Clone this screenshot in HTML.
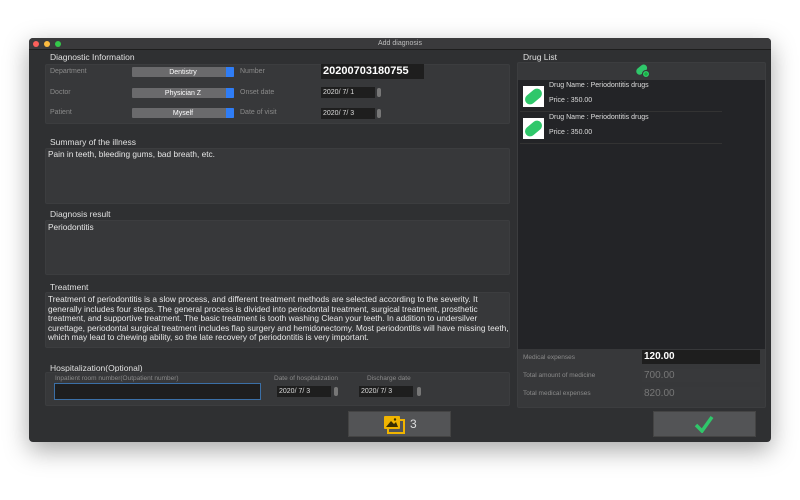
<!DOCTYPE html>
<html><head><meta charset="utf-8"><style>
*{margin:0;padding:0;box-sizing:border-box}
body{width:800px;height:500px;background:#fff;position:relative;overflow:hidden;font-family:"Liberation Sans",sans-serif;}
.a{position:absolute}
.win{left:29px;top:38px;width:742px;height:404px;background:#2f3032;box-shadow:0 8px 25px rgba(0,0,0,.35);border-radius:4px;overflow:hidden}
.tb{left:0;top:0;width:742px;height:12px;background:#3a3a3c;border-bottom:1px solid #1e1e1e;color:#bdbdbd;font-size:7px;text-align:center;line-height:12px}
.dot{width:6px;height:6px;border-radius:50%;top:3px}
.panel{background:#37383a;border:1px solid #3c3d3f;border-radius:2px}
.lt{color:#e0e0e0;font-size:8.5px}
.lg{color:#8a8a8a;font-size:7px}
.sel{background:#6a6a6c;height:10px;color:#fff;font-size:7px;text-align:center;line-height:11px;border-radius:1px}
.sel b{position:absolute;right:0;top:0;width:8px;height:10px;background:#2f7df6;border-radius:0 1px 1px 0}
.date{background:#1e1e1e;color:#ddd;font-size:7px;height:11px;line-height:11px;padding-left:2px}
.step{width:4px;height:9px;background:#777;border-radius:2px}
.txt{color:#e6e6e6;font-size:8.3px;line-height:9.6px}
</style></head><body>
<div class="a win">
<div class="a tb">Add diagnosis</div>
<div class="a dot" style="left:4px;background:#fc605b"></div>
<div class="a dot" style="left:15px;background:#fdbc40"></div>
<div class="a dot" style="left:26px;background:#34c84a"></div>

<div class="a lt" style="left:21px;top:14px">Diagnostic Information</div>
<div class="a panel" style="left:16px;top:26px;width:465px;height:60px"></div>
<div class="a lg" style="left:21px;top:30px">Department</div>
<div class="a lg" style="left:21px;top:51px">Doctor</div>
<div class="a lg" style="left:21px;top:71px">Patient</div>
<div class="a sel" style="left:103px;top:29px;width:102px">Dentistry<b></b></div>
<div class="a sel" style="left:103px;top:50px;width:102px">Physician Z<b></b></div>
<div class="a sel" style="left:103px;top:70px;width:102px">Myself<b></b></div>
<div class="a lg" style="left:211px;top:30px">Number</div>
<div class="a lg" style="left:211px;top:51px">Onset date</div>
<div class="a lg" style="left:211px;top:71px">Date of visit</div>
<div class="a" style="left:292px;top:26px;width:103px;height:15px;background:#1e1e1e;color:#fff;font-size:11px;font-weight:bold;line-height:15px;padding-left:2px">20200703180755</div>
<div class="a date" style="left:292px;top:49px;width:54px">2020/ 7/ 1</div>
<div class="a step" style="left:348px;top:50px"></div>
<div class="a date" style="left:292px;top:70px;width:54px">2020/ 7/ 3</div>
<div class="a step" style="left:348px;top:71px"></div>

<div class="a lt" style="left:21px;top:99px">Summary of the illness</div>
<div class="a panel" style="left:16px;top:110px;width:465px;height:56px"></div>
<div class="a txt" style="left:19px;top:112px">Pain in teeth, bleeding gums, bad breath, etc.</div>
<div class="a lt" style="left:21px;top:171px">Diagnosis result</div>
<div class="a panel" style="left:16px;top:182px;width:465px;height:55px"></div>
<div class="a txt" style="left:19px;top:185px">Periodontitis</div>
<div class="a lt" style="left:21px;top:244px">Treatment</div>
<div class="a panel" style="left:16px;top:254px;width:465px;height:56px"></div>
<div class="a txt" style="left:19px;top:257px;width:462px">Treatment of periodontitis is a slow process, and different treatment methods are selected according to the severity. It generally includes four steps. The general process is divided into periodontal treatment, surgical treatment, prosthetic treatment, and supportive treatment. The basic treatment is tooth washing Clean your teeth. In addition to undersilver curettage, periodontal surgical treatment includes flap surgery and hemidonectomy. Most periodontitis will have missing teeth, which may lead to chewing ability, so the late recovery of periodontitis is very important.</div>

<div class="a lt" style="left:21px;top:325px">Hospitalization(Optional)</div>
<div class="a panel" style="left:16px;top:334px;width:465px;height:34px"></div>
<div class="a lg" style="left:26px;top:337px;font-size:6.5px">Inpatient room number(Outpatient number)</div>
<div class="a" style="left:25px;top:345px;width:207px;height:17px;background:#1e1e1e;border:1px solid #3b6fa6"></div>
<div class="a lg" style="left:245px;top:337px;font-size:6.5px">Date of hospitalization</div>
<div class="a lg" style="left:338px;top:337px;font-size:6.5px">Discharge date</div>
<div class="a date" style="left:248px;top:348px;width:54px">2020/ 7/ 3</div>
<div class="a step" style="left:305px;top:349px"></div>
<div class="a date" style="left:330px;top:348px;width:54px">2020/ 7/ 3</div>
<div class="a step" style="left:388px;top:349px"></div>

<div class="a" style="left:319px;top:373px;width:103px;height:26px;background:#535456;border:1px solid #444"></div>
<svg class="a" style="left:354px;top:377px" width="24" height="20" viewBox="0 0 24 20"><rect x="5" y="5" width="16" height="13" fill="none" stroke="#f0b400" stroke-width="2"/><rect x="1" y="1" width="16" height="13" rx="1" fill="#f0b400"/><path d="M3 12 L8 6 L11 9 L13 7 L15 12Z" fill="#3a2e00"/><circle cx="12" cy="4.5" r="1.2" fill="#3a2e00"/></svg>
<div class="a" style="left:381px;top:379px;color:#ddd;font-size:12px">3</div>

<div class="a lt" style="left:494px;top:14px">Drug List</div>
<div class="a panel" style="left:488px;top:24px;width:249px;height:346px"></div>
<div class="a" style="left:489px;top:42px;width:247px;height:269px;background:#232427"></div>
<svg class="a" style="left:605px;top:25px" width="16" height="16" viewBox="0 0 16 16"><rect x="2" y="3" width="12" height="7" rx="3.5" transform="rotate(-40 8 7)" fill="#2fc76a"/><circle cx="12" cy="11" r="3.5" fill="#2fc76a" stroke="#353638"/><path d="M12 9v4M10 11h4" stroke="#1a3" stroke-width="1"/></svg>
<div class="a" style="left:494px;top:48px;width:21px;height:21px;background:#fff"></div>
<svg class="a" style="left:494px;top:48px" width="21" height="21" viewBox="0 0 21 21"><rect x="1" y="5.5" width="19" height="10" rx="5" transform="rotate(-40 10.5 10.5)" fill="#2fc76a"/></svg>
<div class="a" style="left:520px;top:44px;color:#ddd;font-size:7px">Drug Name : Periodontitis drugs</div>
<div class="a" style="left:520px;top:59px;color:#ddd;font-size:7px">Price : 350.00</div>
<div class="a" style="left:491px;top:73px;width:202px;height:1px;background:#333"></div>
<div class="a" style="left:494px;top:80px;width:21px;height:21px;background:#fff"></div>
<svg class="a" style="left:494px;top:80px" width="21" height="21" viewBox="0 0 21 21"><rect x="1" y="5.5" width="19" height="10" rx="5" transform="rotate(-40 10.5 10.5)" fill="#2fc76a"/></svg>
<div class="a" style="left:520px;top:76px;color:#ddd;font-size:7px">Drug Name : Periodontitis drugs</div>
<div class="a" style="left:520px;top:91px;color:#ddd;font-size:7px">Price : 350.00</div>
<div class="a" style="left:491px;top:105px;width:202px;height:1px;background:#333"></div>

<div class="a lg" style="left:494px;top:316px;font-size:6.5px">Medical expenses</div>
<div class="a" style="left:613px;top:312px;width:118px;height:14px;background:#1e1e1e;color:#fff;font-size:10px;font-weight:bold;line-height:14px;padding-left:2px">120.00</div>
<div class="a lg" style="left:494px;top:334px;font-size:6.5px">Total amount of medicine</div>
<div class="a" style="left:613px;top:331px;width:118px;height:13px;background:#38393b;color:#777;font-size:10px;line-height:13px;padding-left:2px">700.00</div>
<div class="a lg" style="left:494px;top:352px;font-size:6.5px">Total medical expenses</div>
<div class="a" style="left:613px;top:349px;width:118px;height:13px;background:#38393b;color:#777;font-size:10px;line-height:13px;padding-left:2px">820.00</div>

<div class="a" style="left:624px;top:373px;width:103px;height:26px;background:#535456;border:1px solid #444"></div>
<svg class="a" style="left:665px;top:378px" width="20" height="17" viewBox="0 0 20 17"><path d="M2 9 L8 15 L18 1" fill="none" stroke="#2fc76a" stroke-width="3.5"/></svg>
</div>
</body></html>
